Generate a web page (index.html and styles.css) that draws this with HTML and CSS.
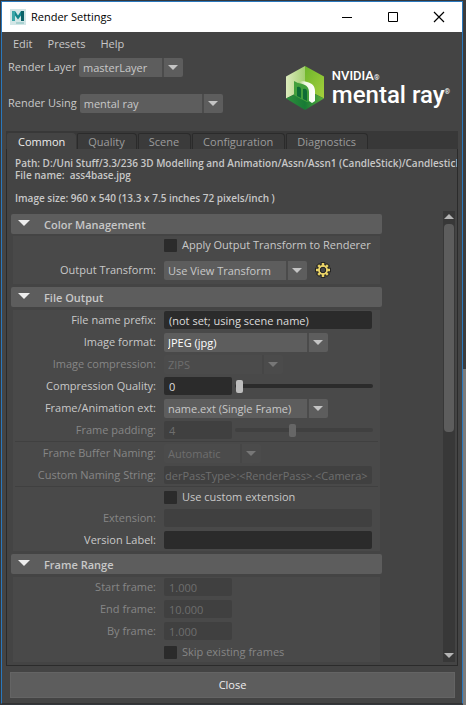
FILE: index.html
```html
<!DOCTYPE html>
<html lang="en">
<head>
<meta charset="utf-8">
<meta name="viewport" content="width=device-width, initial-scale=1">
<title>Render Settings</title>
<link rel="stylesheet" href="styles.css">
</head>
<body>
<div class="window">
  <header class="titlebar">
    <svg class="app-icon" width="16" height="16" viewBox="0 0 16 16" aria-hidden="true">
      <rect width="16" height="16" fill="#d3e6e6"/>
      <path d="M2 2h3l3 4.500 3-4.500h3v10h-3V6.500L8 10.500 5 6.500V12H2z" fill="#12858a"/>
      <path d="M2 2h3v10H2z" fill="#3aa6a8"/>
      <path d="M11 2h3v10h-3z" fill="#0b6268"/>
      <path d="M6 14h8" stroke="#7ebcbc"/>
    </svg>
    <h1 class="title">Render Settings</h1>
    <button class="win-btn" aria-label="Minimize"><svg width="12" height="12" viewBox="0 0 12 12"><path d="M1 6.500h10" stroke="#000"/></svg></button>
    <button class="win-btn" aria-label="Maximize"><svg width="12" height="12" viewBox="0 0 12 12"><path d="M1.500 1.500h9v9h-9z" fill="none" stroke="#000"/></svg></button>
    <button class="win-btn" aria-label="Close window"><svg width="12" height="12" viewBox="0 0 12 12"><path d="M1 1l10 10M11 1L1 11" stroke="#000" stroke-width="1.200"/></svg></button>
  </header>

  <nav class="menubar">
    <button class="menu">Edit</button>
    <button class="menu">Presets</button>
    <button class="menu">Help</button>
  </nav>

  <div class="top">
    <div class="choices">
      <div class="choice">
        <label for="layer">Render Layer</label>
        <span class="drop layer"><select id="layer"><option>masterLayer</option></select></span>
      </div>
      <div class="choice">
        <label for="using">Render Using</label>
        <span class="drop using"><select id="using"><option>mental ray</option></select></span>
      </div>
    </div>
    <div class="brand">
      <svg class="cube" width="40" height="46" viewBox="0 0 40 46" aria-hidden="true">
        <defs>
          <linearGradient id="gl" x1="0" y1="0" x2="1" y2="0"><stop offset="0" stop-color="#dcebbd"/><stop offset="1" stop-color="#a3cf70"/></linearGradient>
          <linearGradient id="gr" x1="0" y1="0" x2="1" y2="1"><stop offset="0" stop-color="#6db52c"/><stop offset="1" stop-color="#a5d03c"/></linearGradient>
          <linearGradient id="gb" x1="0" y1="0" x2="1" y2="0"><stop offset="0" stop-color="#2f8f3c"/><stop offset=".5" stop-color="#177a35"/><stop offset="1" stop-color="#5cb03b"/></linearGradient>
          <linearGradient id="gm" x1="0" y1="0" x2="1" y2="0"><stop offset="0" stop-color="#a3cf70"/><stop offset=".4" stop-color="#eef6e0"/><stop offset="1" stop-color="#fff"/></linearGradient>
        </defs>
        <path d="M20 1L1 11.500v22L20 24z" fill="url(#gl)"/>
        <path d="M20 1l19 10.500v22L20 24z" fill="url(#gr)"/>
        <path d="M20 24L1 33.500 20 45l19-11.500z" fill="url(#gb)"/>
        <path d="M9 16l4 2 4-1 8 5v14l-3 1-4-2-4-2-5-3z" fill="#43a03d"/>
        <path d="M12 22q4-1 4 3v8l-4-2z" fill="#0d6b35"/>
        <path d="M18 24q4-1 4 3v9l-4-2z" fill="#0d6b35"/>
        <path d="M13 18c3-2 6-2 9-1 5 1 8 4 8 9v10l-3 2-3-2V27c0-5-3-8-11-9z" fill="url(#gm)"/>
      </svg>
      <div class="brand-text">
        <span class="brand-top">NVIDIA<sup>®</sup></span>
        <span class="brand-main">mental ray<sup>®</sup></span>
      </div>
    </div>
  </div>

  <div class="tabs" role="tablist">
    <button class="tab active" role="tab" aria-selected="true">Common</button>
    <button class="tab" role="tab">Quality</button>
    <button class="tab" role="tab">Scene</button>
    <button class="tab" role="tab">Configuration</button>
    <button class="tab" role="tab">Diagnostics</button>
  </div>

  <main class="page">
    <div class="info">
      <p>Path: D:/Uni Stuff/3.3/236 3D Modelling and Animation/Assn/Assn1 (CandleStick)/Candlestick</p>
      <p>File name:&nbsp; ass4base.jpg</p>
      <p class="size">Image size: 960 x 540 (13.3 x 7.5 inches 72 pixels/inch )</p>
    </div>
    <div class="scroller">
      <div class="sections">
        <section>
          <h2><button class="head">Color Management</button></h2>
          <div class="body color">
            <div class="row check"><span></span><input type="checkbox" id="apply"><label for="apply">Apply Output Transform to Renderer</label></div>
            <div class="row"><label for="transform">Output Transform:</label>
              <span class="drop transform"><select id="transform"><option>Use View Transform</option></select></span>
              <button class="gear" aria-label="Transform preferences">
                <svg width="16" height="16" viewBox="0 0 16 16">
                  <g stroke="#252525" stroke-width="4.500"><path d="M8 0v16M0 8h16M2.500 2.500l11 11M13.500 2.500l-11 11"/></g>
                  <g stroke="#e6cf62" stroke-width="2.500"><path d="M8 1v14M1 8h14M3.200 3.200l9.600 9.600M12.800 3.200l-9.600 9.600"/></g>
                  <circle cx="8" cy="8" r="3.900" fill="#484848" stroke="#e9d36a" stroke-width="2"/>
                  <circle cx="8" cy="8" r="2.700" fill="#484848" stroke="#252525"/>
                </svg>
              </button>
            </div>
          </div>
        </section>

        <section>
          <h2><button class="head">File Output</button></h2>
          <div class="body">
            <div class="row"><label for="prefix">File name prefix:</label><input class="text wide" id="prefix" value="(not set; using scene name)"></div>
            <div class="row"><label for="format">Image format:</label><span class="drop medium bright"><select id="format"><option>JPEG (jpg)</option></select></span></div>
            <div class="row off"><label for="compression">Image compression:</label><span class="drop small"><select id="compression" disabled><option>ZIPS</option></select></span></div>
            <div class="row"><label for="quality">Compression Quality:</label><input class="text" id="quality" value="0"><input class="range" type="range" aria-label="Compression quality" min="0" max="100" value="1"></div>
            <div class="row"><label for="ext">Frame/Animation ext:</label><span class="drop medium"><select id="ext"><option>name.ext (Single Frame)</option></select></span></div>
            <div class="row off"><label for="padding">Frame padding:</label><input class="text" id="padding" value="4" disabled><input class="range" type="range" aria-label="Frame padding" min="0" max="100" value="41" disabled></div>
            <hr>
            <div class="row off"><label for="buffer">Frame Buffer Naming:</label><span class="drop buffer"><select id="buffer" disabled><option>Automatic</option></select></span></div>
            <div class="row off"><label for="naming">Custom Naming String:</label><input class="text wide full" id="naming" value="derPassType&gt;:&lt;RenderPass&gt;.&lt;Camera&gt;" disabled></div>
            <hr>
            <div class="row check"><span></span><input type="checkbox" id="custom"><label for="custom">Use custom extension</label></div>
            <div class="row off"><label for="extension">Extension:</label><input class="text wide" id="extension" disabled></div>
            <div class="row"><label for="version">Version Label:</label><input class="text wide" id="version"></div>
          </div>
        </section>

        <section>
          <h2><button class="head">Frame Range</button></h2>
          <div class="body">
            <div class="row off"><label for="start">Start frame:</label><input class="text" id="start" value="1.000" disabled></div>
            <div class="row off"><label for="end">End frame:</label><input class="text" id="end" value="10.000" disabled></div>
            <div class="row off"><label for="by">By frame:</label><input class="text" id="by" value="1.000" disabled></div>
            <div class="row check off"><span></span><input type="checkbox" id="skip" disabled><label for="skip">Skip existing frames</label></div>
          </div>
        </section>
      </div>
      <div class="scrollbar" aria-hidden="true">
        <span class="up"></span>
        <span class="track"><span class="thumb"></span></span>
        <span class="down"></span>
      </div>
    </div>
  </main>

  <button class="close">Close</button>
</div>
</body>
</html>
```
FILE: styles.css
```css
* { box-sizing: border-box; }

html { background: #34383c; }

body {
  margin: 0;
  padding: 1px 3px 1px 1px;
  background: linear-gradient(#3c3c3c 369px, #7b7b7b 369px) right / 3px 100% no-repeat;
  font: 11px/16px "Open Sans", "Liberation Sans", sans-serif;
  color: #c8c8c8;
}

button, input, select {
  font: inherit;
  color: inherit;
  margin: 0;
  padding: 0;
  border: 0;
  background: none;
}

h1, h2, p { margin: 0; font-size: inherit; }

.window {
  display: flex;
  flex-direction: column;
  min-height: calc(100vh - 2px);
  border: 1px solid #2a78bd;
  border-bottom-color: #333;
  background: #444;
}

/* Title bar */
.titlebar {
  display: flex;
  align-items: center;
  height: 30px;
  padding-left: 8px;
  background: #fff;
  color: #000;
}
.title {
  flex: 1;
  margin-left: 5px;
  font-weight: 400;
}
.win-btn {
  display: flex;
  align-items: center;
  justify-content: center;
  width: 46px;
  height: 28px;
}

/* Menu and render choices */
.menubar {
  display: flex;
  gap: 15px;
  padding: 4px 11px;
}
.top {
  display: flex;
  justify-content: space-between;
  height: 75px;
  padding: 1px 12px 0 6px;
}
.choices {
  display: flex;
  flex-direction: column;
  gap: 16px;
}
.choice {
  display: flex;
  align-items: center;
  gap: 3px;
  height: 20px;
}

.drop {
  display: flex;
  position: relative;
  height: 19px;
  border-radius: 2px;
  background: #5d5d5d;
}
.drop select {
  appearance: none;
  width: 100%;
  padding: 1px 22px 0 4px;
  opacity: 1;
}
.drop::before {
  content: "";
  position: absolute;
  right: 19px;
  width: 2px;
  height: 100%;
  background: #4b4b4b;
}
.drop::after {
  content: "";
  position: absolute;
  right: 5px;
  top: 7px;
  border: 5px solid transparent;
  border-top-color: #c4c4c4;
  border-bottom: 0;
  pointer-events: none;
}
.layer { width: 104px; }
.using { width: 143px; }
.transform { width: 143px; }
.medium { width: 164px; }
.small { width: 119px; }
.buffer { width: 97px; }
.bright { color: #fff; }

.brand {
  display: flex;
  gap: 7px;
  padding-top: 8px;
  color: #fff;
}
.brand-text {
  display: flex;
  flex-direction: column;
  padding-top: 4px;
  font-family: Roboto, sans-serif;
  font-weight: 500;
}
.brand-top { font-size: 13px; line-height: 14px; }
.brand-main { font-size: 24px; line-height: 25px; }
.brand sup { font-size: 7px; line-height: 0; vertical-align: 0; }
.brand-main sup { vertical-align: 9px; }

/* Tabs */
.tabs {
  display: flex;
  gap: 1px;
  height: 18px;
  margin: 0 4px;
  padding: 2px 2px 0 1px;
  background: #383838;
}
.tab {
  padding: 0 11px 0 10px;
  border: 1px solid #2b2b2b;
  border-bottom: 0;
  border-radius: 2px 4px 0 0;
  background: #3b3b3b;
  color: #9c9c9c;
}
.tab.active {
  padding: 0 10px;
  border-color: #444;
  background: #444;
  color: #eee;
}

/* Page */
.page {
  flex: 1;
  margin: 0 4px;
  padding: 8px 0 1px 4px;
  border: solid #2b2b2b;
  border-width: 0 1px 1px;
}
.info {
  height: 54px;
  overflow: hidden;
  padding-left: 4px;
  font-size: 10px;
  line-height: 12px;
  font-weight: 600;
  white-space: nowrap;
}
.size { margin-top: 11px; }
.scroller {
  display: flex;
  justify-content: space-between;
  margin-right: 2px;
}
.sections {
  flex: 0 1 371px;
  padding-top: 3px;
}
section + section { margin-top: 3px; }
.head {
  display: flex;
  align-items: center;
  width: 100%;
  height: 20px;
  padding: 1px 7px 0;
  border-radius: 2px;
  background: #5d5d5d;
  font-weight: 600;
}
.head::before {
  content: "";
  margin: 0 14px 4px 0;
  border: 6px solid transparent;
  border-top-color: #eee;
  border-bottom: 0;
}
.body {
  margin: 2px 2px 0;
  background: #494949;
  box-shadow: inset 0 1px #444;
}
.color {
  margin-top: 1px;
  padding-bottom: 3px;
}
.color .row + .row { margin-top: 4px; }
.row {
  display: grid;
  grid-template-columns: 143px auto auto;
  justify-content: start;
  align-items: center;
  column-gap: 8px;
  height: 22px;
}
.row > label:first-child { text-align: right; }
.off { color: #868686; }
.off .drop, .off .text { color: #6e6e6e; }
.off .drop { background: #4b4b4b; }
.off .drop::before { background: #464646; }
.off .drop::after { border-top-color: #777; }
.check {
  grid-template-columns: 146px auto auto;
  column-gap: 5px;
  height: 20px;
}

.text {
  width: 68px;
  height: 18px;
  padding: 1px 5px 0;
  border-radius: 2px;
  background: #2b2b2b;
  color: #ddd;
}
.wide { width: 208px; }
.full { padding: 1px 1px 0; }
.text:disabled { background: #404040; }

input[type="checkbox"] {
  appearance: none;
  width: 13px;
  height: 13px;
  border-radius: 1px;
  background: #2b2b2b;
}
.range {
  appearance: none;
  width: 138px;
  height: 13px;
  margin-left: -5px;
}
.range::-webkit-slider-runnable-track {
  height: 4px;
  border-radius: 2px;
  background: #2b2b2b;
}
.range::-webkit-slider-thumb {
  appearance: none;
  width: 7px;
  height: 13px;
  margin-top: -4px;
  border-radius: 2px;
  background: #bdbdbd;
}
.range:disabled::-webkit-slider-runnable-track { background: #404040; }
.range:disabled::-webkit-slider-thumb { background: #666; }

.gear {
  display: flex;
  width: 16px;
  height: 16px;
}
hr {
  height: 1px;
  margin: 0 2px;
  border: 0;
  background: #404040;
}

/* Scroll bar */
.scrollbar {
  display: flex;
  flex-direction: column;
  align-items: center;
  width: 12px;
  background: #383838;
}
.up {
  margin: 3px 0 5px;
  border: 5px solid transparent;
  border-bottom-color: #b5b5b5;
  border-top: 0;
}
.down {
  margin: 5px 0 4px;
  border: 5px solid transparent;
  border-top-color: #b5b5b5;
  border-bottom: 0;
}
.track { flex: 1; width: 10px; }
.thumb {
  display: block;
  height: 49%;
  border-radius: 4px;
  background: #5d5d5d;
}

.close {
  height: 26px;
  margin: 6px 7px 5px 8px;
  border: 1px solid #646464;
  background: #5d5d5d;
  color: #eee;
}
```
